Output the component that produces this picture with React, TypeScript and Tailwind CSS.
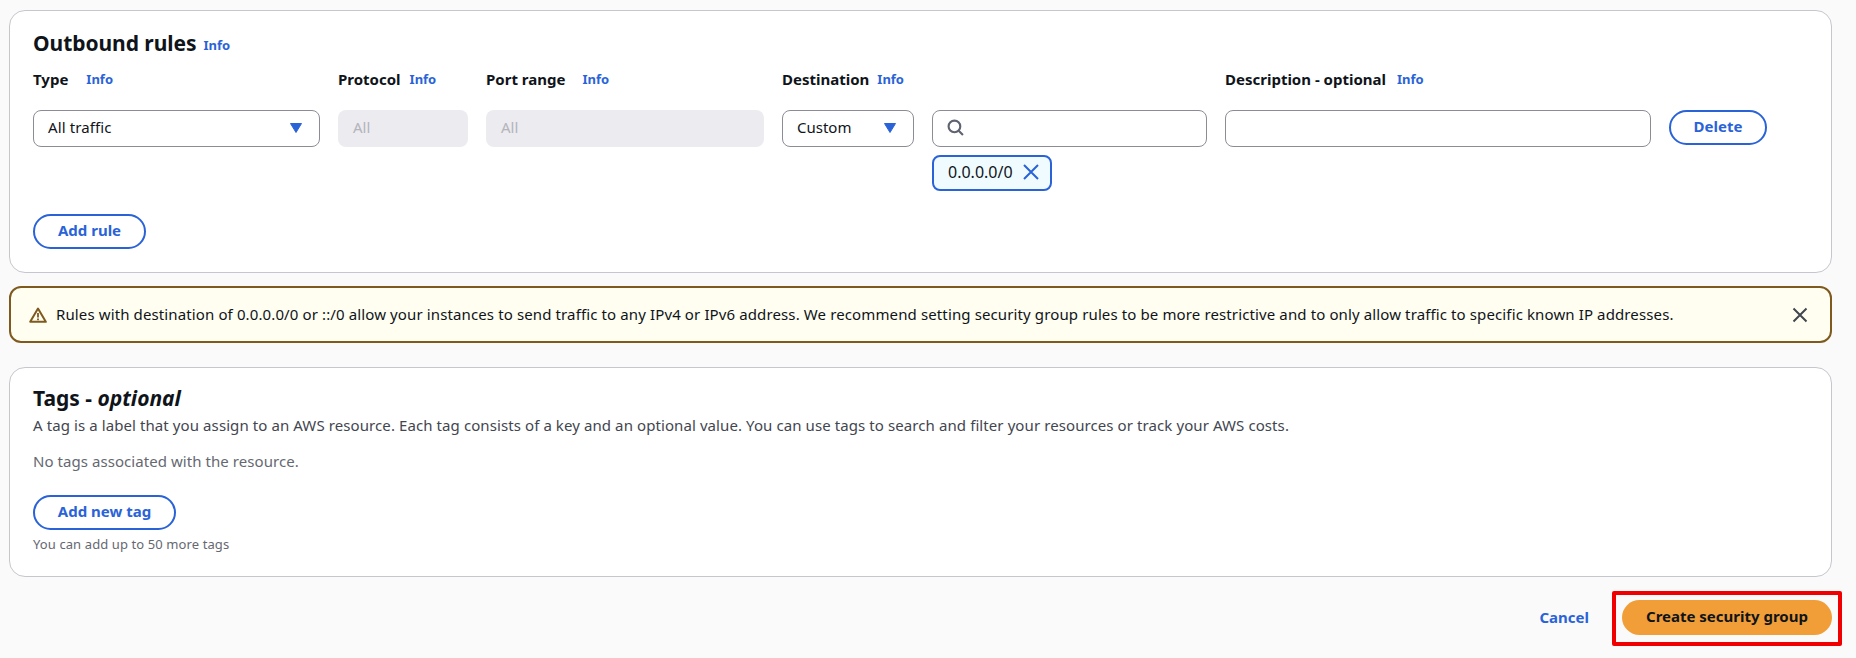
import React from "react";

const Info = ({ className = "" }: { className?: string }) => (
  <span className={`text-[13px] leading-[16px] font-bold text-[#2a63d8] ${className}`}>Info</span>
);

const Caret = () => (
  <svg width="14" height="12" viewBox="0 0 14 12" className="shrink-0">
    <path d="M1.5 1.5h11L7 10.5z" fill="#2a63d8" stroke="#2a63d8" strokeWidth="1" strokeLinejoin="round" />
  </svg>
);

const Label = ({ text, gap, width }: { text: string; gap: string; width: string }) => (
  <div className={`flex items-center shrink-0 ${width}`}>
    <span className={`text-[15px] leading-[20px] font-bold text-[#0f141a] ${gap}`}>{text}</span>
    <Info />
  </div>
);

const Pill = ({ text, className }: { text: string; className: string }) => (
  <button className={`flex items-center justify-center rounded-full border-2 border-[#2a63d8] bg-white pb-[2px] text-[15px] font-bold text-[#2a63d8] ${className}`}>
    {text}
  </button>
);

export default function App() {
  return (
    <div
      className="min-h-[658px] bg-[#fafafa] pt-[10px] pl-[9px] pr-[24px] text-[#0f141a] overflow-hidden"
      style={{ fontFamily: '"Noto Sans", sans-serif' }}
    >
      <section className="h-[263px] rounded-[16px] border border-[#c6c6cd] bg-white pl-[23px] pt-[18px]">
        <div className="flex items-center h-[28px]">
          <h2 className="text-[21px] leading-[28px] font-bold tracking-[-0.05px]">Outbound rules</h2>
          <Info className="ml-[7px] mt-[4px]" />
        </div>
        <div className="flex h-[20px] mt-[12px] items-center">
          <Label text="Type" gap="mr-[18px]" width="w-[305px]" />
          <Label text="Protocol" gap="mr-[9px]" width="w-[148px]" />
          <Label text="Port range" gap="mr-[17px]" width="w-[296px]" />
          <Label text="Destination" gap="mr-[8px]" width="w-[443px]" />
          <Label text="Description - optional" gap="mr-[11px]" width="w-[300px]" />
        </div>
        <div className="flex mt-[21px] gap-[18px] items-start">
          <div className="flex items-center justify-between w-[287px] h-[37px] rounded-[8px] border border-[#8c8c94] bg-white pl-[14px] pr-[16px] pb-[2px] text-[15px] tracking-[0.12px]">
            <span>All traffic</span>
            <Caret />
          </div>
          <div className="flex items-center w-[130px] h-[37px] rounded-[8px] bg-[#ebebf0] pl-[15px] pb-[2px] text-[15px] text-[#b4b4bb]">All</div>
          <div className="flex items-center w-[278px] h-[37px] rounded-[8px] bg-[#ebebf0] pl-[15px] pb-[2px] text-[15px] text-[#b4b4bb]">All</div>
          <div className="flex items-center justify-between w-[132px] h-[37px] rounded-[8px] border border-[#8c8c94] bg-white pl-[14px] pr-[16px] pb-[2px] text-[15px]">
            <span>Custom</span>
            <Caret />
          </div>
          <div className="w-[275px] shrink-0">
            <div className="flex items-center h-[37px] rounded-[8px] border border-[#8c8c94] bg-white pl-[14px] pb-[2px]">
              <svg width="17" height="17" viewBox="0 0 16 16" fill="none" stroke="#5f6370" strokeWidth="2">
                <circle cx="7" cy="7" r="5.5" />
                <path d="M11 11L15 15" />
              </svg>
            </div>
            <div className="mt-[8px] flex items-center w-[120px] h-[36px] rounded-[8px] border-2 border-[#2a63d8] bg-[#f0fbff] pl-[14px] pb-[2px] text-[16px]">
              <span>0.0.0.0/0</span>
              <svg width="16" height="16" viewBox="0 0 16 16" fill="none" stroke="#2a63d8" strokeWidth="2" className="ml-[10px] shrink-0">
                <path d="M1 1l14 14M15 1L1 15" />
              </svg>
            </div>
          </div>
          <div className="w-[426px] h-[37px] rounded-[8px] border border-[#8c8c94] bg-white shrink-0" />
          <Pill text="Delete" className="w-[98px] h-[35px] shrink-0" />
        </div>
        <Pill text="Add rule" className="w-[113px] h-[35px] relative top-[23px]" />
      </section>

      <div className="mt-[13px] flex items-center h-[57px] rounded-[12px] border-2 border-[#7f5a1e] bg-[#fffef0] pl-[18px] pr-[22px]">
        <svg width="18" height="16" viewBox="0 0 18 16" fill="none" className="shrink-0">
          <path d="M9 1.5L16.8 14.8H1.2z" stroke="#7f5a1e" strokeWidth="2" strokeLinejoin="round" />
          <path d="M9 6v4.5M9 11.5v1.7" stroke="#7f5a1e" strokeWidth="1.8" />
        </svg>
        <span className="ml-[9px] pb-[2px] text-[15px] leading-[20px] tracking-[0.12px] flex-1 whitespace-nowrap">
          Rules with destination of 0.0.0.0/0 or ::/0 allow your instances to send traffic to any IPv4 or IPv6 address. We recommend setting security group rules to be more restrictive and to only allow traffic to specific known IP addresses.
        </span>
        <svg width="16" height="16" viewBox="0 0 16 16" fill="none" stroke="#424650" strokeWidth="2">
          <path d="M1.5 1.5l13 13M14.5 1.5l-13 13" />
        </svg>
      </div>

      <section className="mt-[24px] h-[210px] rounded-[16px] border border-[#c6c6cd] bg-white pl-[23px] pt-[18px]">
        <h2 className="text-[21px] leading-[24px] font-bold">
          Tags - <em className="italic">optional</em>
        </h2>
        <p className="mt-[5px] text-[15px] leading-[20px] tracking-[0.09px] text-[#424650]">
          A tag is a label that you assign to an AWS resource. Each tag consists of a key and an optional value. You can use tags to search and filter your resources or track your AWS costs.
        </p>
        <p className="mt-[16px] text-[15px] leading-[20px] tracking-[0.06px] text-[#656871]">No tags associated with the resource.</p>
        <Pill text="Add new tag" className="mt-[24px] w-[143px] h-[35px]" />
        <p className="mt-[6px] text-[13px] leading-[16px] tracking-[0.1px] text-[#656871]">You can add up to 50 more tags</p>
      </section>

      <div className="mt-[14px] flex items-center justify-end">
        <span className="pb-[2px] text-[15px] font-bold text-[#2a63d8] mr-[23px]">Cancel</span>
        <div className="rounded-[2px] border-4 border-[#f00000] px-[6px] pt-[5px] pb-[7px] -mr-[10px]">
          <button className="flex items-center justify-center w-[210px] h-[35px] rounded-full bg-[#f29e38] pb-[2px] text-[15px] font-bold text-[#0f141a]">
            Create security group
          </button>
        </div>
      </div>
    </div>
  );
}
